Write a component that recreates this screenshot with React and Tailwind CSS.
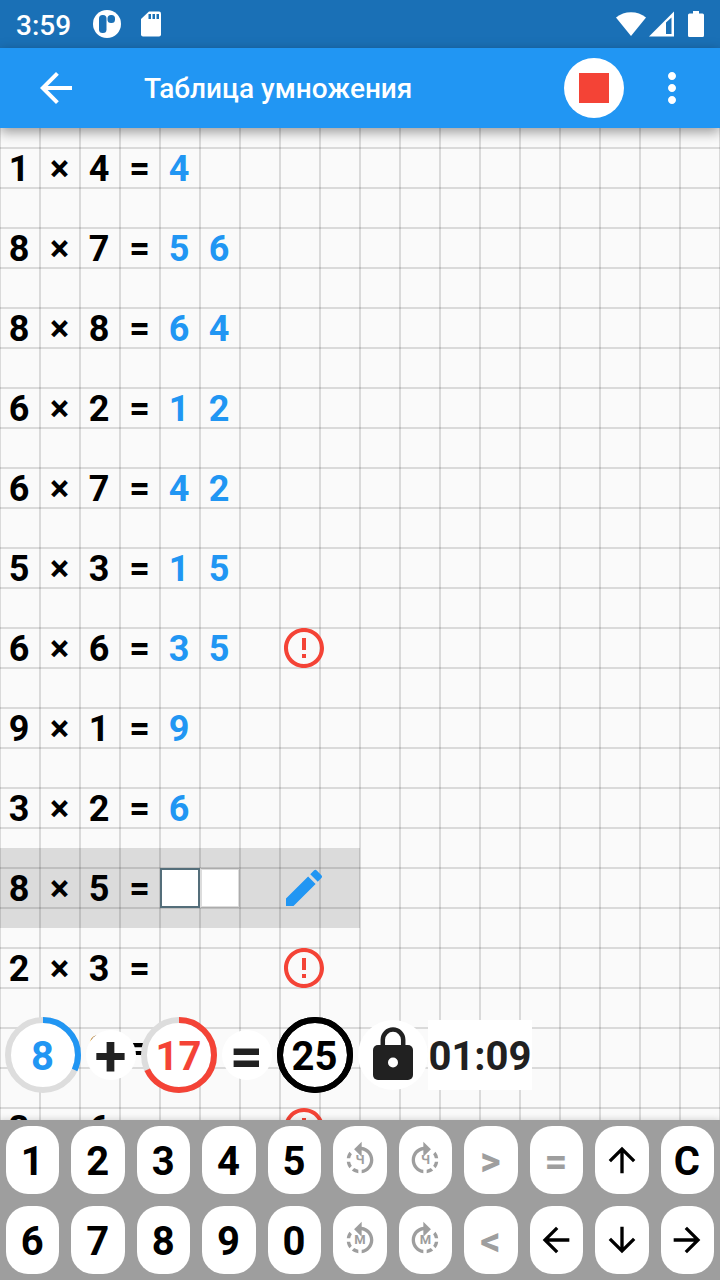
import { MdArrowBack, MdArrowForward, MdArrowUpward, MdArrowDownward, MdMoreVert, MdEdit, MdErrorOutline, MdRotateLeft, MdRotateRight } from "react-icons/md";

const rows = [
  { a: 1, b: 4, r: "4" },
  { a: 8, b: 7, r: "56" },
  { a: 8, b: 8, r: "64" },
  { a: 6, b: 2, r: "12" },
  { a: 6, b: 7, r: "42" },
  { a: 5, b: 3, r: "15" },
  { a: 6, b: 6, r: "35", wrong: true },
  { a: 9, b: 1, r: "9" },
  { a: 3, b: 2, r: "6" },
  { a: 8, b: 5, r: "", active: true },
  { a: 2, b: 3, r: "", wrong: true },
  { a: 3, b: 9, r: "" },
  { a: 3, b: 6, r: "", wrong: true },
];

function Cell({ children, sign }) {
  return <span className={"flex h-10 w-10 shrink-0 items-center justify-center pt-[2px] " + (sign ? "pr-[1px]" : "pr-[2px]")}>{children}</span>;
}

function Row({ row }) {
  return (
    <div className={"flex h-20 w-[360px] shrink-0 items-center text-[36px] leading-10 font-bold text-black " + (row.active ? "bg-black/[0.12]" : "")}>
      <Cell>{row.a}</Cell>
      <Cell sign>×</Cell>
      <Cell>{row.b}</Cell>
      <Cell sign>=</Cell>
      <div className="flex w-[120px] text-[#2196f3]">
        {row.active ? (
          <>
            <span className="h-10 w-10 border-2 border-[#546e7a] bg-white" />
            <span className="h-10 w-10 border border-[#acacac] border-l-[#dcdcdc] bg-white shadow-[inset_0_0_0_1px_#dcdcdc]" />
          </>
        ) : (
          row.r.split("").map((d, i) => <Cell key={i}>{d}</Cell>)
        )}
      </div>
      {row.wrong && <MdErrorOutline className="size-12 text-[#f44336]" />}
      {row.active && <MdEdit className="size-12 text-[#2196f3]" />}
    </div>
  );
}

function Ring({ value, part, color, track, text }) {
  const c = 2 * Math.PI * 35;
  return (
    <div className="relative flex size-[76px] items-center justify-center">
      <svg viewBox="0 0 76 76" className="absolute inset-0 size-full">
        <circle cx="38" cy="38" r="35" fill="#fff" />
        <circle cx="38" cy="38" r="35" fill="none" stroke={track} strokeWidth="6" />
        <circle cx="38" cy="38" r="35" fill="none" stroke={color} strokeWidth="6" strokeDasharray={`${c * part} ${c}`} transform="rotate(-90 38 38)" />
      </svg>
      <span className={"relative pt-[4px] pr-[1px] text-[40px] leading-none font-bold " + text}>{value}</span>
    </div>
  );
}

function Sign({ children }) {
  return (
    <div className="flex size-[50px] items-center justify-center rounded-full bg-white text-[58px] leading-none font-bold text-[#212121]">
      <span className="pt-[2px] pr-[1px]">{children}</span>
    </div>
  );
}

function ScoreBar() {
  return (
    <div className="absolute bottom-[27px] left-[5px] flex items-center gap-[5px]">
      <Ring value="8" part={0.32} color="#2196f3" track="#dddddd" text="text-[#2196f3]" />
      <Sign>+</Sign>
      <Ring value="17" part={0.68} color="#f44336" track="#dddddd" text="text-[#f44336]" />
      <Sign>=</Sign>
      <Ring value="25" part={1} color="#000" track="#000" text="text-black" />
      <div className="flex">
        <div className="size-[70px] rounded-full bg-white">
          <svg viewBox="0 0 70 70" className="size-full">
            <path d="M24.800 27V19.800a10.200 10.200 0 0 1 20.400 0V27" fill="none" stroke="#212121" strokeWidth="4.500" />
            <rect x="15" y="25" width="40" height="35" rx="5" fill="#212121" />
            <circle cx="35" cy="42.500" r="5" fill="#fff" />
          </svg>
        </div>
        <div className="flex h-[70px] w-[104px] items-center justify-center bg-white pt-[4px] text-[40px] leading-none font-bold text-[#212121]">01:09</div>
      </div>
    </div>
  );
}

function Turn({ icon: Icon, letter }) {
  return (
    <span className="relative flex size-10 items-center justify-center text-[#9e9e9e]">
      <Icon className="size-10" />
      <span className="absolute inset-0 flex items-center justify-center pb-px text-[13px] leading-none font-bold">{letter}</span>
    </span>
  );
}

const muted = (s) => <span className="pt-[3px] pr-[1px] text-[#9e9e9e]">{s}</span>;

const keys = [
  "1", "2", "3", "4", "5",
  <Turn icon={MdRotateLeft} letter="Ч" />,
  <Turn icon={MdRotateRight} letter="Ч" />,
  muted(">"),
  muted("="),
  <MdArrowUpward className="size-10" />,
  "C",
  "6", "7", "8", "9", "0",
  <Turn icon={MdRotateLeft} letter="М" />,
  <Turn icon={MdRotateRight} letter="М" />,
  muted("<"),
  <MdArrowBack className="size-10" />,
  <MdArrowDownward className="size-10" />,
  <MdArrowForward className="size-10" />,
];

export default function App() {
  return (
    <div className="flex h-[1280px] w-[720px] flex-col overflow-hidden bg-[#fafafa] font-['Roboto',sans-serif]">
      <div className="z-10 flex h-12 shrink-0 items-center bg-[#1a70b6] pl-4 text-white">
        <span className="w-[76px] pt-[3px] text-[28px] leading-none font-medium">3:59</span>
        <svg viewBox="0 0 30 30" className="size-[30px]">
          <circle cx="15" cy="15" r="14" fill="#fff" />
          <rect x="7" y="6" width="7.500" height="18" rx="3.500" fill="#1a70b6" />
          <rect x="15.500" y="6" width="7.500" height="8" rx="3.500" fill="#1a70b6" />
        </svg>
        <svg viewBox="0 0 20 26" className="ml-[19px] h-[26px] w-5">
          <path d="M8 .5h10a2 2 0 0 1 2 2v21a2 2 0 0 1-2 2H2a2 2 0 0 1-2-2V8z" fill="#fff" />
          <path d="M7.500 3h2.500v5H7.500zM11.500 3H14v5h-2.500zM15.500 3H18v5h-2.500z" fill="#1a70b6" />
        </svg>
        <div className="ml-auto flex items-center pr-4">
          <svg viewBox="0 0 30 26" className="h-[26px] w-[30px]" fill="#fff">
            <path d="M0 6.500a24 24 0 0 1 30 0L15 25z" />
          </svg>
          <svg viewBox="0 0 26 26" className="ml-[2px] h-[26px] w-[26px]" fill="#fff">
            <path fillRule="evenodd" d="M1 25.500 26 .5v25zM18 23h5.500V6.500L18 11.500z" />
          </svg>
          <svg viewBox="0 0 16 26" className="ml-[14px] h-[26px] w-4" fill="#fff">
            <path d="M5 0h6v2.500h3.500A1.500 1.500 0 0 1 16 4v20.500a1.500 1.500 0 0 1-1.500 1.500h-13A1.500 1.500 0 0 1 0 24.500V4a1.500 1.500 0 0 1 1.500-1.500H5z" />
          </svg>
        </div>
      </div>
      <header className="z-10 flex h-20 shrink-0 items-center bg-[#2196f3] pl-8 text-white shadow-[0_4px_12px_rgba(0,0,0,0.4)]">
        <MdArrowBack className="size-12" />
        <h1 className="ml-16 pt-[2px] text-[28px] leading-none font-medium">Таблица умножения</h1>
        <div className="ml-auto flex size-[60px] items-center justify-center rounded-full bg-white">
          <div className="size-[30px] bg-[#f44336]" />
        </div>
        <MdMoreVert className="mr-6 ml-6 size-12" />
      </header>
      <main className="relative h-[992px] shrink-0 overflow-hidden bg-[#fafafa]">
        <div className="flex flex-col bg-[linear-gradient(to_right,rgba(0,0,0,0.13)_1px,transparent_1px,transparent_39px,rgba(0,0,0,0.13)_39px),linear-gradient(to_bottom,transparent_19px,rgba(0,0,0,0.13)_19px,rgba(0,0,0,0.13)_21px,transparent_21px)] bg-[size:40px_40px]">
          {rows.map((row, i) => (
            <Row key={i} row={row} />
          ))}
        </div>
        <ScoreBar />
      </main>
      <footer className="z-10 grid h-40 shrink-0 grid-cols-11 bg-[#9e9e9e] shadow-[0_-1px_6px_rgba(0,0,0,0.15)]">
        {keys.map((k, i) => (
          <button key={i} className="m-[6px] flex h-[68px] items-center justify-center rounded-[22px] bg-white text-[40px] leading-none font-bold text-black">
            {typeof k === "string" ? <span className="pt-[3px] pr-[1px]">{k}</span> : k}
          </button>
        ))}
      </footer>
    </div>
  );
}
